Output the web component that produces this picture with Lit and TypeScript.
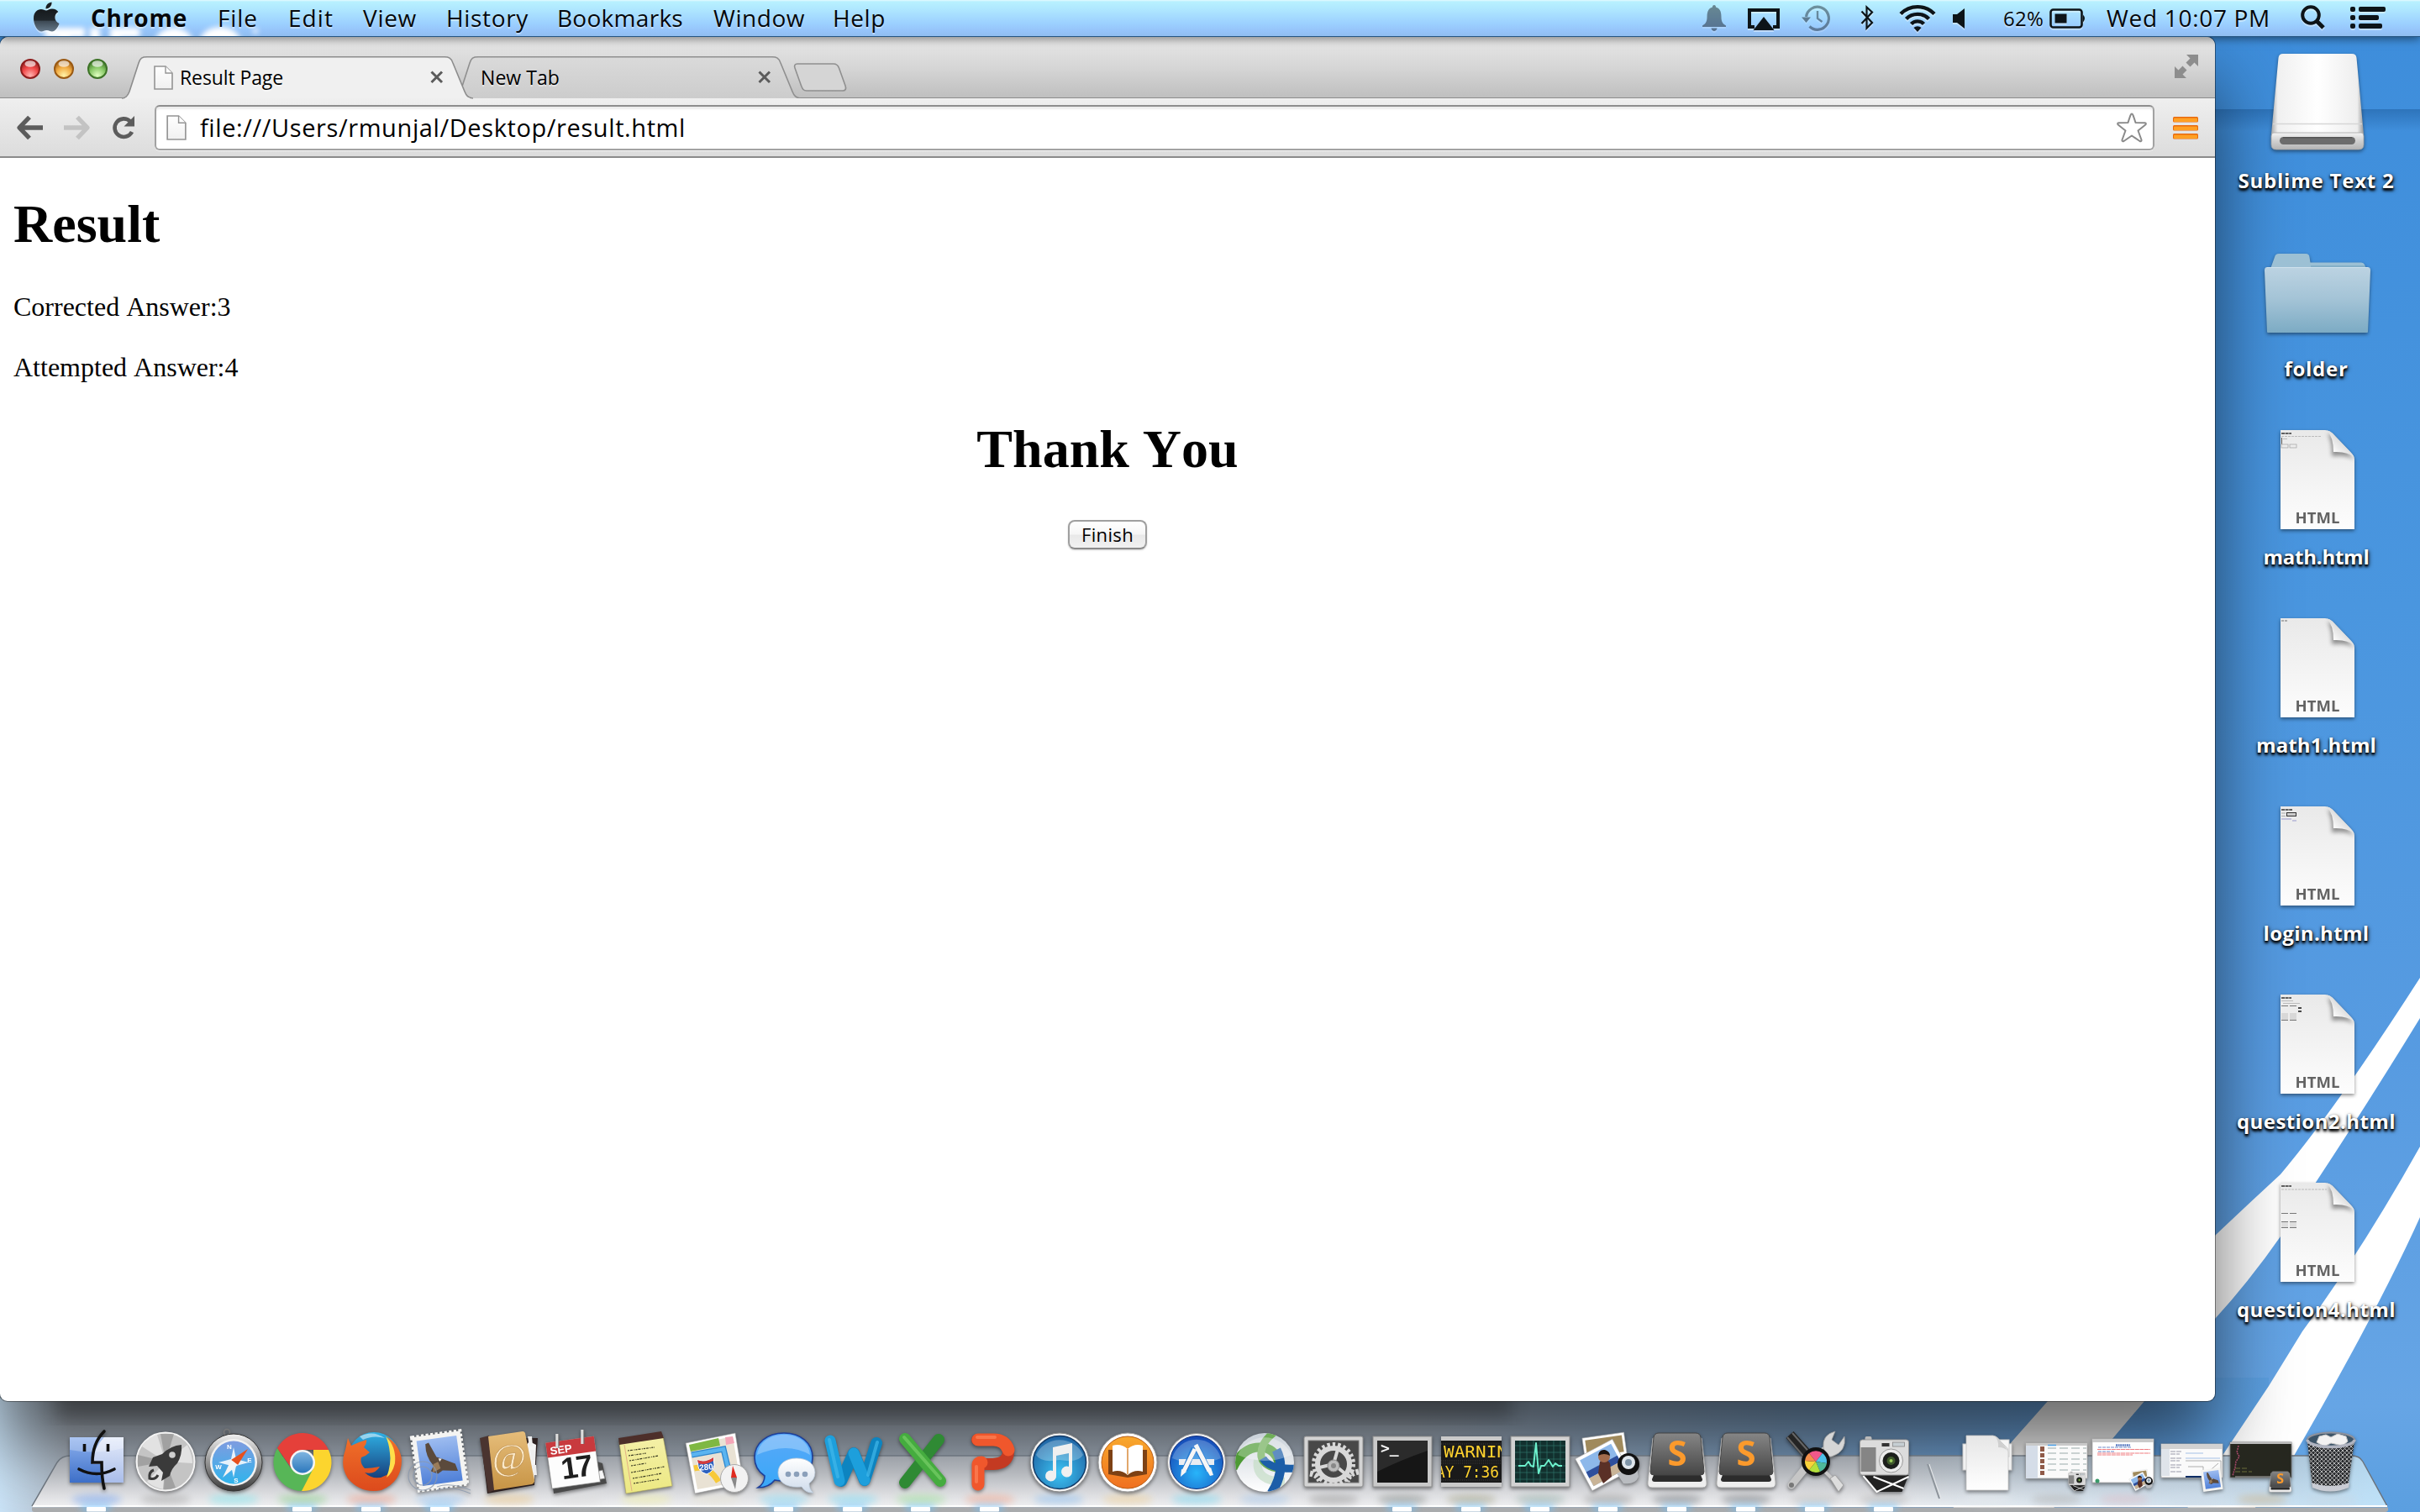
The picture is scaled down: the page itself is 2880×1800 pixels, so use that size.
import { LitElement, html, svg, css } from "lit";
import { customElement, property } from "lit/decorators.js";

const UI = css`"Open Sans", "Noto Sans", "Liberation Sans", sans-serif`;

/** One line of text tracked out (or in) so that it covers a given width. */
@customElement("fit-text")
class FitText extends LitElement {
  @property() text = "";
  @property({ type: Number }) span = 100;
  static styles = css`
    :host { display: inline-block; white-space: pre; }
    .line { display: inline-block; }
  `;
  firstUpdated() {
    const line = this.renderRoot.querySelector(".line") as HTMLElement;
    const natural = line.getBoundingClientRect().width;
    line.style.letterSpacing = `${(this.span - natural) / this.text.length}px`;
  }
  render() {
    return html`<span class="line">${this.text}</span>`;
  }
}

@customElement("menu-bar")
class MenuBar extends LitElement {
  static styles = css`
    :host {
      display: flex; position: relative; height: 44px; box-sizing: border-box;
      border-bottom: 1px solid #245481; overflow: hidden;
      background: linear-gradient(#e6f9ff 0, #b8f1ff 2px, #aee6ff 12px, #9cd0ff 28px, #96c4fa 36px, #90bdf0 43px);
      font: 28px/43px ${UI}; color: #05080b;
      text-shadow: 0 2px 1px rgba(255, 255, 255, 0.45);
    }
    .haze { position: absolute; left: 0; top: 0; filter: blur(3px); }
    .menus { position: relative; display: grid; padding-left: 38px; grid-template-columns: 70px 151px 84px 89px 99px 132px 186px 142px 80px; }
    .app { font-weight: 700; }
    .status { position: relative; margin-left: auto; display: grid; grid-template-columns: 54px 64px 70px 46px 64px 60px 55px 68px 231px 59px 83px; }
    .pct { font-size: 24px; }
    .menus svg, .status svg { display: block; filter: drop-shadow(0 2px 0 rgba(255, 255, 255, 0.4)); }
    .status .faded { opacity: 0.42; }
  `;
  render() {
    const menus: [string, number][] = [["File", 48], ["Edit", 54], ["View", 64], ["History", 98], ["Bookmarks", 150], ["Window", 109], ["Help", 63]];
    return html`
      <svg class="haze" width="340" height="60" viewBox="0 0 340 60"><g fill="#fff"><rect x="53" y="33" width="48" height="12"/><rect x="70" y="33" width="13" height="27"/><rect x="107" y="33" width="12" height="27"/><rect x="131" y="33" width="36" height="12" rx="5"/><rect x="131" y="33" width="12" height="27"/><ellipse cx="207" cy="52" rx="23" ry="19"/><ellipse cx="262" cy="52" rx="25" ry="20"/><circle cx="304" cy="37" r="3"/></g></svg>
      <nav class="menus">
        <svg width="34" height="43" viewBox="0 0 34 43">
          <defs><linearGradient id="ap" x2="0" y2="1"><stop offset="0" stop-color="#15191c"/><stop offset=".5" stop-color="#20272c"/><stop offset=".55" stop-color="#3d4a55"/><stop offset="1" stop-color="#66798a"/></linearGradient></defs>
          <path fill="#1b2023" d="M16.500 10.500C16 6.500 19 3.300 23.500 2.500C24 6.500 21 10.200 16.500 10.500Z"/>
          <path fill="url(#ap)" d="M17 12.500C18.500 12.500 20.500 10.500 24 10.500C27.500 10.700 30 12 31.300 14C25.500 17.500 26.500 25.500 32.500 28C31 32.500 27.500 37.500 24 37.500C21.500 37.500 20.500 36 17.500 36C14.500 36 13.500 37.500 11 37.500C6.500 37.500 2 29 2 22C2 14.500 6.500 11 10.800 11C13.500 11 15.500 12.500 17 12.500Z"/>
        </svg>
        <fit-text class="app" text="Chrome" span="115"></fit-text>
        ${menus.map(([t, w]) => html`<fit-text text=${t} span=${w}></fit-text>`)}
      </nav>
      <div class="status">
        <svg class="faded" width="30" height="43" viewBox="0 0 30 43"><path d="M14 6C15.500 6 16 7 16 8.500C21 10 22.500 14 22.500 20C22.500 26 24 28 28 30.500V32H0V30.500C4 28 5.500 26 5.500 20C5.500 14 7 10 12 8.500C12 7 12.500 6 14 6ZM10.500 33.500H17.500C17 38 11 38 10.500 33.500Z"/></svg>
        <svg width="40" height="43" viewBox="0 0 40 43"><path fill="none" stroke="#0d1418" stroke-width="4" d="M8 32H2V12H36V32H30"/><path fill="#0d1418" d="M19 20L31.500 36H6.500Z"/></svg>
        <svg class="faded" width="36" height="43" viewBox="0 0 36 43"><g fill="none" stroke="#0d1418" stroke-width="3.200"><path d="M5.500 20A13.500 13.500 0 1 1 9.500 31.500"/><path stroke-width="2.400" d="M19 13V22L24.500 26"/></g><path d="M0 20.500H11L5.500 27Z"/></svg>
        <svg width="20" height="43" viewBox="0 0 20 43"><path fill="none" stroke="#0d1418" stroke-width="2.200" d="M1.500 13.500L14 27L7.500 33.500V8.500L14 14.500L1.500 28"/></svg>
        <svg width="46" height="43" viewBox="0 0 46 43"><g fill="none" stroke="#0d1418" stroke-width="4.400"><path d="M2 16.500A28 28 0 0 1 42 16.500"/><path d="M8.500 22.500A19 19 0 0 1 35.500 22.500"/><path d="M14.500 28.500A10.500 10.500 0 0 1 29.500 28.500"/></g><path fill="#0d1418" d="M17.500 33A6.500 6.500 0 0 1 26.500 33L22 38Z"/></svg>
        <svg width="16" height="43" viewBox="0 0 16 43"><path fill="#0d1418" d="M0 17H5L14 10V34L5 27H0Z"/></svg>
        <fit-text class="pct" text="62%" span="48"></fit-text>
        <svg width="46" height="43" viewBox="0 0 46 43"><rect x="1.500" y="11.500" width="37" height="21" rx="3" fill="none" stroke="#0d1418" stroke-width="2.600"/><rect x="6.500" y="16.500" width="14" height="11" fill="#0d1418"/><path fill="#0d1418" d="M40 17.500Q44 22 40 26.500Z"/></svg>
        <fit-text text="Wed 10:07 PM" span="195"></fit-text>
        <svg width="32" height="43" viewBox="0 0 32 43"><circle cx="12" cy="18" r="9.800" fill="none" stroke="#0d1418" stroke-width="4"/><path stroke="#0d1418" stroke-width="5" d="M18.500 24.500L27 33"/></svg>
        <svg width="46" height="43" viewBox="0 0 46 43"><g fill="#0d1418"><rect x="0" y="8" width="6" height="6" rx="2"/><rect x="0" y="18" width="6" height="6" rx="2"/><rect x="0" y="28" width="6" height="6" rx="2"/><rect x="10" y="8" width="32" height="6" rx="2"/><rect x="10" y="18" width="24" height="6" rx="2"/><rect x="10" y="28" width="28" height="6" rx="2"/></g></svg>
      </div>`;
  }
}

const pageGlyph = (w: number, h: number) => html`
  <svg width=${w} height=${h} viewBox="0 0 23 29">
    <defs><linearGradient id="pg" x2="0" y2="1"><stop offset="0" stop-color="#fff"/><stop offset="1" stop-color="#f0f0f0"/></linearGradient></defs>
    <path fill="url(#pg)" stroke="#949494" stroke-width="1.600" d="M1 1H14L22 9V28H1Z"/><path fill="#fff" stroke="#949494" stroke-width="1.400" d="M14 1V9H22"/>
  </svg>`;
const closeGlyph = html`<svg class="close" width="16" height="16" viewBox="0 0 16 16"><path stroke="#5b5b5b" stroke-width="3" d="M1.500 1.500L14 14M14 1.500L1.500 14"/></svg>`;

@customElement("browser-window")
class BrowserWindow extends LitElement {
  static styles = css`
    :host {
      display: flex; flex-direction: column; width: 2636px; height: 1624px; background: #fff; overflow: hidden;
      border-radius: 10px 10px 9px 9px;
      box-shadow: 0 0 0 1px rgba(0, 0, 0, 0.4), 0 54px 90px rgba(0, 0, 0, 0.6);
    }
    .strip {
      display: flex; height: 73px; box-sizing: border-box; padding-left: 24px; border-bottom: 1px solid #8c8c8c;
      background: linear-gradient(#f3f3f3 0, #e6e6e6 3px, #d6d6d6 36px, #bfbfbf 72px); font: 23px/50px ${UI}; color: #000;
    }
    .lights { display: flex; gap: 16px; padding-top: 26px; width: 121px; }
    .tab { position: relative; z-index: 1; display: flex; align-items: center; height: 50px; margin-top: 23px; box-sizing: border-box; }
    .tab.active { width: 418px; padding: 0 35px 0 38px; z-index: 2; }
    .idle { width: 414px; margin-left: -24px; padding: 0 35px 0 33px; }
    .shape { position: absolute; left: 0; top: 0; z-index: -1; }
    .tab fit-text { margin-left: 8px; flex: 1; text-shadow: 0 2px 0 rgba(255, 255, 255, 0.5); }
    .idle fit-text { margin-left: 0; }
    .newtab { margin: 31px 0 0 -9px; }
    .expand { margin: 20px 20px 0 auto; }
    .toolbar {
      display: flex; align-items: center; height: 71px; box-sizing: border-box; padding: 0 20px 0 18px; border-bottom: 2px solid #8a8a8a;
      background: linear-gradient(#efefef, #dcdcdc);
    }
    .nav { display: flex; width: 166px; gap: 22px; align-items: center; }
    .reload { margin-left: 2px; }
    .omni {
      display: flex; align-items: center; box-sizing: border-box; width: 2380px; height: 54px; padding: 0 7px 0 12px; margin-right: auto;
      border: 2px solid #a2a2a2; border-top-color: #8d8d8d; border-radius: 6px; background: #fff;
      box-shadow: inset 0 3px 2px #ececec, 0 1px 0 #f4f4f4; font: 29px/50px ${UI}; color: #000;
    }
    .omni fit-text { margin-left: 16px; flex: 1; }
    .page { padding: 42px 16px 0; font: 32px/36px "Liberation Serif", "Times New Roman", serif; color: #000; font-kerning: none; }
    h1 { font-size: 64px; line-height: 74px; margin: 0 0 43px; font-weight: 700; }
    p { margin: 0 0 36px; }
    .center { display: flex; flex-direction: column; align-items: center; padding-top: 7px; }
    .center h1 { margin-bottom: 47px; }
    button {
      width: 94px; height: 35px; padding: 0; border: 2px solid #9f9f9f; border-bottom-color: #8a8a8a; border-radius: 8px;
      background: linear-gradient(#fff 0, #f6f6f6 48%, #e9e9e9 52%, #f1f1f1 100%); box-shadow: 0 1px 2px rgba(0, 0, 0, 0.2);
      font: 22px/31px ${UI}; color: #000;
    }
  `;
  render() {
    const light = (id: string, a: string, b: string, c: string) => html`
      <svg width="24" height="24" viewBox="0 0 24 24">
        <defs><radialGradient id=${id} cx=".5" cy=".85" r=".8"><stop offset="0" stop-color=${c}/><stop offset=".55" stop-color=${b}/><stop offset="1" stop-color=${a}/></radialGradient></defs>
        <circle cx="12" cy="12" r="11" fill="url(#${id})" stroke=${a} stroke-width="2"/><ellipse cx="12" cy="6" rx="6.500" ry="3.800" fill="#fff" opacity=".65"/>
      </svg>`;
    const edge = (w: number) => `M0 50C5 50 7 47 9 42L20 8C22 2 24 .8 30 .8H${w - 34}C${w - 29} .8 ${w - 26} 2 ${w - 24} 8L${w - 10} 42C${w - 8} 47 ${w - 6} 49.500 ${w} 50`;
    return html`
      <div class="strip">
        <div class="lights">
          ${light("lr", "#8e1d1d", "#f04848", "#ffb3b0")}${light("ly", "#9a5a14", "#f2ab42", "#fff3a8")}${light("lg", "#3d7327", "#86c765", "#e0ffc0")}
        </div>
        <div class="tab active">
          <svg class="shape" width="418" height="51" viewBox="0 0 418 51"><path fill="#f0f0f0" stroke="#8c8c8c" stroke-width="1.600" d=${edge(418)}/><path stroke="#efefef" stroke-width="2" d="M4 50.500H414"/></svg>
          ${pageGlyph(23, 29)}<fit-text text="Result Page" span="123"></fit-text>${closeGlyph}
        </div>
        <div class="tab idle">
          <svg class="shape" width="414" height="50" viewBox="0 0 414 50"><defs><linearGradient id="it" x2="0" y2="1"><stop offset="0" stop-color="#dadada"/><stop offset="1" stop-color="#cccccc"/></linearGradient></defs><path fill="url(#it)" stroke="#8f8f8f" stroke-width="1.600" d=${edge(414)}/></svg>
          <fit-text text="New Tab" span="94"></fit-text>${closeGlyph}
        </div>
        <svg class="newtab" width="64" height="34" viewBox="0 0 64 34"><path fill="#d5d5d5" stroke="#8f8f8f" stroke-width="1.600" d="M5 1H48C51 1 53 2 54.500 6L62 27C63.500 31 62 33 59 33H16C12 33 11 31 9.500 27L2 6C.8 3 2 1 5 1Z"/></svg>
        <svg class="expand" width="28" height="30" viewBox="0 0 28 30"><g fill="#8d8d8d"><path d="M14 1H28V15L23.500 10.500L18.500 15.500L13.500 10.500L18.500 5.500Z"/><path d="M0 15L4.500 19.500L9.500 14.500L14.500 19.500L9.500 24.500L14 29H0Z"/></g></svg>
      </div>
      <div class="toolbar">
        <div class="nav">
          <svg width="34" height="30" viewBox="0 0 34 30"><path fill="none" stroke="#5c5c5c" stroke-width="5.400" stroke-linejoin="round" d="M33 15H7M17 2.500L5 15L17 27.500"/></svg>
          <svg width="34" height="30" viewBox="0 0 34 30"><path fill="none" stroke="#c3c3c3" stroke-width="5.400" stroke-linejoin="round" d="M2 15H28M18 2.500L30 15L18 27.500"/></svg>
          <svg class="reload" width="32" height="30" viewBox="0 0 32 30"><path fill="none" stroke="#5c5c5c" stroke-width="4.600" d="M25 20A10.800 10.800 0 1 1 23 7.500"/><path fill="#5c5c5c" d="M28 1V13.500H15.500Z"/></svg>
        </div>
        <div class="omni">
          ${pageGlyph(24, 30)}<fit-text text="file:///Users/rmunjal/Desktop/result.html" span="578"></fit-text>
          <svg width="36" height="36" viewBox="0 0 36 36"><path fill="#fff" stroke="#8a8a8a" stroke-width="2" stroke-linejoin="round" d="M18 1.500C19 1.500 19.500 2.500 22.500 12L33.500 12.300C35.500 12.500 35 14 34 14.700L25.500 21.500L29.500 32.500C29.800 34.500 28.500 34.500 27.500 34L18 27.500L8.500 34C7.500 34.500 6.200 34.500 6.500 32.500L10.500 21.500L2 14.700C1 14 .5 12.500 2.500 12.300L13.500 12C16.500 2.500 17 1.500 18 1.500Z"/></svg>
        </div>
        <svg width="30" height="28" viewBox="0 0 30 28">${[1, 11, 21].map((y) => svg`<rect x="0" y=${y} width="30" height="6.500" rx="1.500" fill="#e8690e"/><rect x="1" y=${y + 1.6} width="28" height="4.400" rx="1" fill="#ffa024"/>`)}</svg>
      </div>
      <div class="page">
        <h1>Result</h1>
        <p>Corrected Answer:3</p>
        <p>Attempted Answer:4</p>
        <div class="center"><h1>Thank You</h1><button><fit-text text="Finish" span="62"></fit-text></button></div>
      </div>`;
  }
}

/** Small marks standing for the page preview in the corner of each document. */
const previews: Record<string, unknown> = {
  "math.html": svg`<path stroke="#333" stroke-width="1.600" stroke-dasharray="4 .6" d="M1 4H13"/><path stroke="#bbb" stroke-dasharray="3 1" d="M1 7.500H49"/><path stroke="#555" d="M1.500 9V17"/><path stroke="#bbb" d="M3 10.500H8"/><rect x="1" y="17" width="8" height="4" fill="none" stroke="#aaa" stroke-width=".8"/><rect x="11" y="17" width="8" height="4" fill="none" stroke="#aaa" stroke-width=".8"/>`,
  "math1.html": svg`<path stroke="#999" stroke-width="1.400" stroke-dasharray="3 1" d="M1 3H8"/>`,
  "login.html": svg`<path stroke="#333" stroke-width="1.600" stroke-dasharray="4 .6" d="M1 4H14"/><rect x="7.500" y="7.500" width="11" height="4" fill="#ccc" stroke="#333"/><path stroke="#aaa" d="M1 8H6M1 11.500H6"/><path stroke="#99c" d="M1 15H13M14 17H19"/>`,
  "question2.html": svg`<path stroke="#333" stroke-width="1.600" stroke-dasharray="4 .6" d="M1 4H13"/><path stroke="#bbb" d="M1 7.500H15M3 10.500H23"/><path stroke="#777" d="M1 13.500H9M11 13.500H19M1 30.500H9M11 30.500H19"/><path stroke="#111" stroke-width="1.400" d="M21 16H25M21 20H25"/><path fill="#d8d8d8" d="M1 22H9V30H1ZM11 22H19V30H11Z"/>`,
  "question4.html": svg`<path stroke="#333" stroke-width="1.600" stroke-dasharray="4 .6" d="M1 4H13"/><path stroke="#bbb" stroke-dasharray="3 1" d="M1 8H55"/><path stroke="#777" d="M1 36.500H9M11 36.500H19M1 46.500H9M11 46.500H19M1 53.500H9M11 53.500H19"/><path fill="#dedede" d="M1 47H9V53H1ZM11 47H19V53H11Z"/>`,
};

@customElement("desktop-item")
class DesktopItem extends LitElement {
  @property() name = "";
  @property() kind = "doc";
  @property({ type: Number }) span = 100;
  static styles = css`
    :host { display: flex; flex-direction: column; justify-content: flex-end; align-items: center; height: 224px; }
    svg { display: block; margin-bottom: 17px; overflow: visible; filter: drop-shadow(0 2px 2px rgba(0, 0, 0, 0.45)); }
    .name { margin-right: 3px; font: bold 24px/32px ${UI}; color: #fff; text-shadow: 0 3px 3px rgba(0, 0, 0, 0.85), 1px 2px 5px rgba(0, 0, 0, 0.75), 0 1px 2px #000; }
    .type { font: bold 18.5px ${UI}; fill: #636363; }
  `;
  private art() {
    if (this.kind === "drive")
      return svg`
        <defs><linearGradient id="db"><stop offset="0" stop-color="#a8a8a8"/><stop offset=".07" stop-color="#f0f0f0"/><stop offset=".5" stop-color="#fff"/><stop offset=".93" stop-color="#eee"/><stop offset="1" stop-color="#999"/></linearGradient>
        <linearGradient id="df" x2="0" y2="1"><stop offset="0" stop-color="#f4f4f4"/><stop offset=".5" stop-color="#cfcfcf"/><stop offset="1" stop-color="#b4b4b4"/></linearGradient></defs>
        <path fill="url(#db)" d="M24 2H106Q111 2 111.500 7L120 98H10L18.500 7Q19 2 24 2Z"/><path stroke="#d6d6d6" stroke-width="1.500" d="M12 85.500H118"/>
        <path fill="url(#df)" stroke="#a5a5a5" stroke-width=".8" d="M13 96H117Q120 96 120 100V110Q120 116 114 116H16Q10 116 10 110V100Q10 96 13 96Z"/><rect x="20" y="101" width="90" height="9" rx="4.500" fill="#6c6c6c"/><path stroke="#555" stroke-width="1.500" d="M24 101.800H106"/>`;
    if (this.kind === "folder")
      return svg`
        <defs><linearGradient id="fb" x2="0" y2="1"><stop offset="0" stop-color="#bcd3e2"/><stop offset=".5" stop-color="#a3c3d6"/><stop offset="1" stop-color="#7cabc4"/></linearGradient></defs>
        <path fill="#9cc0d4" d="M9 34L14 20Q15 16 19 16H51Q55 16 55.500 20L56.500 26.500H117Q120 26.500 121 29L123 34Z"/><path stroke="#6fa0bb" d="M57 31H122"/>
        <path fill="url(#fb)" d="M5 32H125Q128 32 128 36L125 109Q125 110 124 110H6Q5 110 5 109L2 36Q2 32 5 32Z"/><path stroke="#cfe1ec" stroke-width="1" d="M5 32.500H125"/>`;
    return svg`
      <defs><linearGradient id="pb" x2="0" y2="1"><stop offset="0" stop-color="#e9e9e9"/><stop offset="1" stop-color="#fdfdfd"/></linearGradient>
      <linearGradient id="cu" x1="0" y1="1" x2="1" y2="0"><stop offset=".2" stop-color="#fff"/><stop offset=".7" stop-color="#d0d0d0"/><stop offset="1" stop-color="#a8a8a8"/></linearGradient>
      <filter id="bl"><feGaussianBlur stdDeviation="2.500"/></filter><clipPath id="dc"><path d="M0 0H53Q59 0 64 6L84 27Q88 31 88 35V118H0Z"/></clipPath></defs>
      <g transform="translate(21 2)"><path fill="url(#pb)" d="M0 0H53Q59 0 64 6L84 27Q88 31 88 35V118H0Z"/>
        <g clip-path="url(#dc)"><path fill="#000" opacity=".4" filter="url(#bl)" d="M56 4Q62 14 61 31Q80 29 88 36L66 8Z"/></g>
        <path fill="url(#cu)" d="M55 .5Q63 8 63 26Q80 25 88 33Q86 29 84 27L64 6Q60 1 55 .5Z"/>${previews[this.name]}
        <text class="type" x="44" y="111" text-anchor="middle" textLength="53">HTML</text></g>`;
  }
  render() {
    return html`<svg width="130" height="120" viewBox="0 0 130 120">${this.art()}</svg><fit-text class="name" text=${this.name} span=${this.span}></fit-text>`;
  }
}

const sublime = svg`
  <path fill="#eee" stroke="#aaa" d="M7 10H65L71 62Q72 69 66 69H6Q0 69 1 62Z"/>
  <path fill="#2c2c2c" d="M8 54H64L66 59Q66 62 63 62H9Q6 62 6 59Z"/>
  <path fill="url(#sg)" stroke="#444" d="M14 4H58Q63 4 64 9L68 50Q68 54 64 54H8Q4 54 4 50L8 9Q9 4 14 4Z"/>
  <text x="36" y="43" text-anchor="middle" class="sub">S</text>`;
const eagle = svg`<path fill="#5b4a3c" d="M24 15L28 14L35 32L41 35L56 43L58 52L40 49L34 52L26 48L30 42Q22 30 24 15Z"/><path fill="#9a7c5a" d="M30 40L36 38L38 46L28 50Z"/><path fill="#eee" d="M37 34L41 35L38 38Z"/>`;
const photos = svg`
  <g transform="rotate(-8 36 30)"><rect x="8" y="6" width="50" height="40" fill="#fff" stroke="#bbb" stroke-width=".6"/><rect x="11" y="9" width="44" height="20" fill="#a08a5c"/></g>
  <g transform="rotate(-28 30 42)"><rect x="4" y="20" width="50" height="43" fill="#fff" stroke="#aaa" stroke-width=".6"/><rect x="8" y="24" width="42" height="35" fill="#8db8ea"/><rect x="8" y="40" width="42" height="8" fill="#2e4f9c"/><path fill="#c9b497" d="M8 48H50V59H8Z"/></g>
  <path fill="#5a3026" d="M24 52L26 38Q33 32 38 40L40 56L30 64Z"/><circle cx="31" cy="32" r="7" fill="#a36b4c"/><path fill="#1d120f" d="M24 31Q25 23 32 24Q38 26 38 31Q31 27 24 31Z"/>
  <path fill="#b9bcc0" d="M46 52L70 46L72 56Q68 66 54 64Z"/><circle cx="60" cy="41" r="13" fill="#111"/><circle cx="60" cy="39" r="8" fill="#dfe6ec"/><circle cx="60" cy="39" r="4" fill="#7f95a8"/>`;
const camera = svg`<g transform="translate(3.500 0)">
  <path fill="#222" d="M8 54H62L54 74H24Z"/><path fill="none" stroke="#fff" stroke-width="2" d="M8 55L24 74L62 56M20 56L56 70"/>
  <rect x="10" y="8" width="8" height="8" rx="2" fill="#bbb"/><rect x="4" y="12" width="58" height="42" rx="3" fill="#dcdcdc" stroke="#999"/><rect x="5" y="21" width="18" height="29" fill="#858585"/>
  <rect x="30" y="16" width="9" height="4" fill="#333"/><rect x="43" y="15" width="14" height="5" fill="#c6ced3" stroke="#888" stroke-width=".8"/>
  <circle cx="41" cy="37" r="14" fill="#ececec" stroke="#999"/><circle cx="41" cy="37" r="10" fill="#1c1f1c"/><circle cx="41" cy="37" r="5" fill="#3f5a2c"/><circle cx="41" cy="37" r="2" fill="#9ccf5a"/></g>`;

interface App { art: unknown; glow: string; open?: boolean }
const apps: App[] = [
  { glow: "#7aa6f0", open: true, art: svg`
    <rect x="4" y="9" width="64" height="54" fill="url(#fl)"/><path fill="url(#fr)" d="M45 9H68V63H42L43 41H31Q32 22 45 9Z"/><path fill="#fff" opacity=".25" d="M4 9H68V22Q36 30 4 24Z"/>
    <path fill="none" stroke="#111" stroke-width="3.600" stroke-linecap="round" d="M45 2Q31 16 31 39H42Q42 58 45 70M15 47Q36 58 57 47"/><path stroke="#111" stroke-width="3.600" d="M21.500 17V26M49.500 17V26"/>` },
  { glow: "#aaaaaa", art: svg`
    <circle cx="36" cy="38" r="34.500" fill="#c4c4c4" stroke="#f4f4f4" stroke-width="2"/><path fill="#fff" opacity=".5" d="M36 38L8 20Q16 8 26 6ZM36 38L62 18Q68 30 68 40ZM36 38L14 62Q24 70 34 71Z"/><path fill="#777" opacity=".45" d="M36 38L30 5H46ZM36 38L48 69Q38 72 33 71ZM36 38L3 30V44Z"/>
    <path fill="#3a3a3a" d="M55 18Q42 19 32 29L21 33L16 44L26 43L33 51L31 61L41 55Q43 46 50 40Q56 30 55 18Z"/><circle cx="44" cy="30" r="3.800" fill="#d0d0d0"/><path fill="none" stroke="#3a3a3a" stroke-width="3" d="M22 48Q16 50 17 58Q24 60 27 54"/>` },
  { glow: "#86e6ee", art: svg`
    <circle cx="28" cy="3" r="3.500" fill="none" stroke="#777" stroke-width="1.600"/><circle cx="36" cy="39" r="34" fill="url(#rim)" stroke="#333"/><circle cx="36" cy="39" r="28" fill="#f2f2f2"/><circle cx="36" cy="39" r="25.500" fill="url(#saf)"/>
    <path fill="#fff" opacity=".85" d="M36 21L39 35L54 39L39 43L36 57L33 43L18 39L33 35Z"/><path fill="#e8501c" d="M53 23L41 42L33 36Z"/><path fill="#f4f4f4" d="M23 57L33 36L41 42Z"/>
    <g class="compass"><text x="31" y="23">N</text><text x="39" y="63">S</text><text x="18" y="47">W</text><text x="55" y="39">E</text></g>` },
  { glow: "#8fd08c", open: true, art: svg`
    <path fill="#57b657" d="M6 22A34 34 0 0 0 35 73L50 46L22 46Z"/><path fill="#fcd52e" d="M67 24A34 34 0 0 1 35 73L49 46V24Z"/><path fill="#e5403a" d="M6 22A34 34 0 0 1 67 24H36L23 46Z"/>
    <circle cx="36" cy="39" r="15" fill="#f6f6f6"/><circle cx="36" cy="39" r="12.500" fill="url(#chb)"/>` },
  { glow: "#f0a08a", open: true, art: svg`
    <circle cx="39" cy="34" r="31" fill="url(#ffb)"/><path fill="url(#ffo)" d="M8 10L12 19Q20 15 30 12Q31 16 27 21L34 27Q30 31 24 33Q22 40 28 46Q36 46 46 44Q40 54 28 51Q40 62 54 54Q66 46 62 28Q60 14 54 8Q70 18 72 36Q72 62 48 72Q24 77 8 58Q-2 42 5 24Z"/><path fill="#ffe04a" d="M53 8Q66 20 64 40Q61 52 54 57Q60 40 58 28Q57 16 53 8Z"/><path fill="#fff" opacity=".5" d="M22 8Q38 0 52 10Q38 6 26 12Z"/>` },
  { glow: "#9dc8f4", open: true, art: svg`
    <g transform="translate(-3 0) rotate(-8 38 36)"><rect x="9" y="5" width="58" height="64" fill="#f4f4f2" stroke="#f4f4f2" stroke-width="4" stroke-dasharray="3.200 2.400"/><rect x="14" y="10" width="48" height="54" fill="url(#ml)"/>${eagle}</g>
    <g fill="none" stroke="#8a98ac" stroke-width="1.200" opacity=".8"><circle cx="15" cy="55" r="17"/><circle cx="15" cy="55" r="11"/><path d="M32 68Q48 62 72 72M32 72Q48 66 72 76"/></g>` },
  { glow: "#ecc98e", art: svg`
    <path fill="#2c2020" d="M2 10L10 76L66 66L70 10Z"/><path fill="#f4f4f4" d="M12 71L66 62L68 18L60 14Z"/><path fill="#4a3430" d="M1 10L12 7L19 72L11 75Z"/><path fill="url(#bk)" d="M11 8L52 2Q54 2 55 4L66 60Q66 64 63 65L18 72Z"/><path fill="#eee" d="M58 8H63L64 20H60ZM61 24H66L67 36H63ZM63 42H68L69 54H66Z"/><text x="36" y="47" class="at" text-anchor="middle">@</text>` },
  { glow: "#dddddd", art: svg`
    <path fill="#4a4a4a" d="M1 20L8 76L71 64L66 40Z"/><path fill="#f6f6f6" d="M8 70L69 58L66 48L9 64Z" stroke="#888" stroke-width=".8"/>
    <g transform="rotate(-8 34 40)"><rect x="2" y="11" width="58" height="55" fill="#fdfdfd" stroke="#777" stroke-width=".6"/><path fill="#c83a3e" d="M2 11H60V29H2Z"/><text x="6" y="26" class="mon">SEP</text><text x="34" y="57" class="day" text-anchor="middle">17</text></g><path stroke="#ddd" stroke-width="3.500" d="M12 5V22M42 0V17"/><path stroke="#666" stroke-width="1" d="M14 5V22M44 0V17"/>` },
  { glow: "#f2f0a8", art: svg`
    <path fill="url(#nt)" stroke="#a9a35b" stroke-width=".6" d="M4 15L56 8L67 67L12 76Z"/><path fill="#4d2f2a" d="M3 10L54 2L57 10L4 18Z"/><path stroke="#e0a080" stroke-width=".8" d="M10 18L19 73"/>
    <path fill="none" stroke="#3a3a22" stroke-width="1.200" stroke-dasharray="2 1 3 1.500 1 1" d="M14 25L46 21M15 31L36 28M16 37L51 31M18 43L36 40M18 51L58 44M20 58L55 52M21 64L52 59"/>` },
  { glow: "#e8e4d4", art: svg`
    <path fill="#fff" stroke="#999" stroke-width=".6" d="M1 16L60 4L70 64L12 76Z"/><path fill="#e9e2d4" d="M5 19L57 8L66 62L15 71Z"/><path fill="#7fb843" d="M5 18L40 10L42 19L7 26Z"/><path fill="#f5a6b8" d="M48 9L57 8L59 16L49 18Z"/>
    <path fill="none" stroke="#2e86cc" stroke-width="7" d="M8 30L46 23L52 48"/><path fill="none" stroke="#5ab4f0" stroke-width="4.500" d="M8 30L46 23L52 48"/><path fill="none" stroke="#f7c93a" stroke-width="7" d="M11 46Q28 42 40 62"/>
    <path fill="#2d62c0" stroke="#fff" d="M15 36Q24 40 34 33L35 42Q34 50 26 53Q17 50 16 44Z"/><path fill="#d43c3c" d="M15 36Q24 40 34 33L34 37Q24 43 16 40Z"/><text x="25.500" y="48" class="hwy" text-anchor="middle" transform="rotate(-6 25 45)">280</text>
    <circle cx="59" cy="58" r="16.500" fill="#f2f2f2" stroke="#aaa"/><path fill="#e02b20" d="M57 43L62 57H55Z"/><path fill="#888" d="M55 57H62L60 71Z"/>` },
  { glow: "#8fdcf4", open: true, art: svg`
    <path fill="url(#mb)" stroke="#1d3f9a" stroke-width="1.600" d="M36 4C56 4 70 16 70 33S56 61 36 61Q30 61 25 60Q18 69 5 69Q13 64 13 55Q1 47 1 33C1 16 16 4 36 4Z"/><path fill="#fff" opacity=".28" d="M36 6C54 6 66 16 67 30Q40 14 4 30C6 16 18 6 36 6Z"/>
    <path fill="url(#mw)" stroke="#b9c6d6" stroke-width=".8" d="M51 34C64 34 73 41 73 51Q73 59 66 64Q66 71 71 75Q62 76 57 68C40 70 29 63 29 51C29 41 38 34 51 34Z"/><g fill="#8ba0ba"><circle cx="41" cy="53" r="3.300"/><circle cx="51" cy="53" r="3.300"/><circle cx="61" cy="53" r="3.300"/></g>` },
  { glow: "#86dcf4", open: true, art: svg`
    <g fill="none" stroke-linecap="round" stroke-linejoin="round"><path stroke="#0d84c0" stroke-width="14" d="M22 61L37 28L50 60L64 16"/><path stroke="#1d9fdc" stroke-width="13" d="M9 13L20 61M37 28L50 60"/><path stroke="#42b8ea" stroke-width="4" opacity=".7" d="M8 12L18 56M65 15L54 54"/></g>` },
  { glow: "#9fe09a", open: true, art: svg`
    <g fill="none" stroke-linecap="round" transform="translate(4 0)"><path stroke="#2f8a34" stroke-width="14" d="M53 12L13 63"/><path stroke="#45ac3f" stroke-width="14" d="M13 11L55 61"/><path stroke="#77cf68" stroke-width="4" opacity=".7" d="M12 9L55 58"/></g>` },
  { glow: "#f4a890", open: true, art: svg`
    <g fill="none" stroke-linecap="round" stroke-linejoin="round" transform="translate(8 0)"><path stroke="#c43a22" stroke-width="14" d="M18 41H32Q50 40 50 26Q49 13 34 12H13"/><path stroke="#f0572c" stroke-width="15" d="M14 65V42Q14 39 18 39M14 12H32Q46 12 50 24"/><path stroke="#ff8a60" stroke-width="4" opacity=".6" d="M12 62V44M13 9H34"/></g>` },
  { glow: "#8fc0f0", art: svg`<g transform="translate(1 0)">
    <circle cx="36" cy="39" r="35" fill="#f2f2f2" stroke="#8a8a8a"/><circle cx="36" cy="39" r="31.500" fill="url(#itb)" stroke="#123a66" stroke-width="1.500"/><path fill="#fff" opacity=".25" d="M8 30A31 31 0 0 1 64 30Q58 40 36 36Q14 40 8 30Z"/>
    <path fill="#f0f0f0" d="M28 21L51 16V50A6.500 6.500 0 1 1 47 44V28L32 31V54A6.500 6.500 0 1 1 28 49Z"/></g>` },
  { glow: "#f2d29a", art: svg`
    <circle cx="36" cy="39" r="35" fill="#fff" stroke="#a0a0a0"/><circle cx="36" cy="39" r="31" fill="url(#ibk)" stroke="#b85c14"/><path fill="#7d4114" d="M13 24H59V53L36 57L13 53Z"/><path fill="#fff" d="M36 23Q28 16 18 19V50Q28 47 36 54Q44 47 54 50V19Q44 16 36 23Z"/><path stroke="#d98a3a" stroke-width="1.500" d="M36 23V53"/>` },
  { glow: "#7ed8f2", art: svg`
    <circle cx="36" cy="39" r="34.500" fill="#f4f4f4" stroke="#999"/><circle cx="36" cy="39" r="31.500" fill="url(#asb)" stroke="#10307c"/><path fill="#fff" opacity=".22" d="M7 34A30 30 0 0 1 65 34Q36 46 7 34Z"/>
    <path stroke="#e9edf2" stroke-width="7" d="M15 38.500H57"/><path stroke="#2a7cd0" stroke-width="7" d="M33 22L22 48M37 22L50 48"/><path stroke="#f6f6f6" stroke-width="5" d="M34 23L21 49M35 18L51 49"/><path fill="#f6f6f6" d="M18 47L24 50L17 56ZM48 48L53 45L56 54L52 55Z"/>` },
  { glow: "#a8c8ea", art: svg`
    <circle cx="36" cy="39" r="35" fill="url(#any)"/><g fill="none" clip-path="url(#anc)"><path stroke="#c4ddc6" stroke-width="10" d="M28 36Q24 62 60 62" opacity=".7"/><path stroke="#4d9a34" stroke-width="11" d="M-2 46Q12 16 38 22Q54 28 54 48"/><path stroke="#6fae58" stroke-width="9" d="M52 0Q30 14 32 32Q34 42 50 46"/><path stroke="#1c5ea8" stroke-width="11" d="M50 24Q62 48 44 76"/><path stroke="#1c5ea8" stroke-width="9" d="M34 34Q42 48 74 46"/></g><path fill="#fff" opacity=".3" d="M4 30A35 35 0 0 1 68 30Q36 44 4 30Z"/>` },
  { glow: "#9a9a9a", art: svg`
    <rect x="1" y="8" width="70" height="60" rx="2" fill="#d4d4d4" stroke="#909090"/><rect x="6" y="13" width="60" height="50" fill="#484848" stroke="#777"/>
    <g fill="none" stroke="#d8d8d8"><circle cx="36" cy="41" r="19" stroke-width="6"/><circle cx="36" cy="41" r="23.500" stroke-width="5" stroke-dasharray="3.400 3"/><path stroke-width="4" d="M36 41L42 20M36 41L15 46M36 41L53 55"/><path stroke-width="7" stroke-dasharray="3.400 2.500" d="M8 52Q18 54 20 62M66 50Q54 52 52 62"/></g><circle cx="36" cy="43" r="7" fill="#bbb" stroke="#888"/><circle cx="36" cy="43" r="3" fill="#888"/>` },
  { glow: "#8a8f8c", open: true, art: svg`
    <rect x="1" y="8" width="70" height="60" fill="#c9c9c9" stroke="#8c8c8c"/><rect x="6" y="13" width="60" height="50" fill="#161616"/><path fill="#3a3a3a" d="M6 13H66V25Q34 36 6 50Z" opacity=".6"/><text x="10" y="28" class="term">&gt;_</text>` },
  { glow: "#a5a48a", open: true, art: svg`
    <rect x="0" y="8" width="72" height="60" fill="#1a1a1a"/><rect x="0" y="8" width="72" height="5" fill="#c9c9c9"/><rect x="0" y="63" width="72" height="5" fill="#c9c9c9"/><path stroke="#333" stroke-dasharray="1 1.500" stroke-width="1.500" d="M0 17H72M0 37H72M0 40H72M0 60H72"/>
    <g clip-path="url(#ledc)"><text x="3" y="33" class="led" textLength="76" lengthAdjust="spacingAndGlyphs">WARNIN</text><text x="-6" y="57" class="led" textLength="75" lengthAdjust="spacingAndGlyphs">AY 7:36</text></g>` },
  { glow: "#98b0aa", open: true, art: svg`
    <rect x="1" y="8" width="70" height="60" fill="#d2d2d2" stroke="#8c8c8c"/><rect x="6" y="13" width="60" height="50" fill="#12302e"/><path stroke="#2f7468" stroke-width=".7" d="M12 13V63M20 13V63M28 13V63M36 13V63M44 13V63M52 13V63M60 13V63M6 19H66M6 27H66M6 35H66M6 43H66M6 51H66M6 59H66"/>
    <path fill="none" stroke="#6cf0cc" stroke-width="2" stroke-linejoin="round" d="M10 43H18L22 38L25 43L28 44L31 16L34 52L37 43L41 43L46 36L51 44L54 40L58 43H62"/>` },
  { glow: "#9a9a9a", open: true, art: photos },
  { glow: "#7d8084", open: true, art: sublime },
  { glow: "#7d8084", open: true, art: sublime },
  { glow: "#c0c0c0", open: true, art: svg`
    <path stroke="#242424" stroke-width="12" d="M6 6L30 33"/><path stroke="#666" stroke-width="2" d="M9 4L33 31M3 9L26 36"/><path stroke="#c6c6c6" stroke-width="9" stroke-linecap="round" d="M8 66L34 34L54 20"/><path fill="#d6d6d6" stroke="#999" stroke-width=".8" d="M46 22Q44 6 60 2L56 12L64 18L71 8Q74 26 56 32Q50 34 46 22Z"/><circle cx="8" cy="66" r="3" fill="#777"/>
    <path stroke="#c8c8c8" stroke-width="4" d="M44 46L58 60"/><path fill="#ddd" stroke="#999" stroke-width=".8" d="M54 58L60 54L70 66L64 74Z"/><circle cx="37" cy="38" r="17" fill="#111"/>
    <path fill="#f0588a" d="M37 38L29 28A13 13 0 0 1 45 28Z"/><path fill="#4fc0e8" d="M37 38L45 28A13 13 0 0 1 50 40Z"/><path fill="#4fb89a" d="M37 38L50 40A13 13 0 0 1 42 50Z"/><path fill="#b4e03c" d="M37 38L42 50A13 13 0 0 1 29 48Z"/><path fill="#f8d23a" d="M37 38L29 48A13 13 0 0 1 24 37Z"/><path fill="#f4904a" d="M37 38L24 37A13 13 0 0 1 29 28Z"/>` },
  { glow: "#b8b8b8", open: true, art: camera },
];

const stash: App[] = [
  { glow: "#e6eaee", art: svg`<rect x="7" y="17" width="58" height="31" fill="#f2f2f2" stroke="#ccc"/><rect x="14" y="12" width="48" height="20" fill="#f6f6f6" stroke="#ccc"/><path fill="url(#sh)" stroke="#c4c4c4" stroke-width=".8" d="M11 7H43Q48 8 52 14L60 22Q61 24 61 27V72H11Z"/><path fill="#cfcfcf" d="M44 7Q50 12 49 21Q57 21 61 26Q58 20 52 14Q48 8 44 7Z"/>` },
  { glow: "#b4b4b4", art: svg`<rect x="0" y="16" width="73" height="42" fill="#fafafa" stroke="#aaa" stroke-width=".8"/><rect x="0" y="16" width="73" height="3" fill="#c9c9c9"/><rect x="0" y="19" width="14" height="39" fill="#d5dde8"/><path stroke="#9aa" stroke-dasharray="10 4" d="M26 22H72M26 28H72M26 35H72M26 41H72M26 48H72"/><path stroke="#4aa0e8" stroke-width="1.500" d="M26 18.500H36"/><path fill="#8f5a48" d="M17 20H22V26H17ZM17 28H22V33H17ZM17 35H22V40H17ZM17 42H22V47H17ZM17 49H22V54H17Z"/><g transform="translate(48 47) scale(.35)">${camera}</g>` },
  { glow: "#dcc0c8", art: svg`<rect x="-2" y="11" width="73" height="52" fill="#fefefe" stroke="#aaa" stroke-width=".8"/><rect x="-2" y="11" width="73" height="4" fill="#c9c9c9"/><path stroke="#5f7fc4" stroke-width="2.400" stroke-dasharray="2 .6" d="M26 18.500H43"/><path stroke="#6f8ccb" stroke-dasharray="4 1" d="M5 21H44M5 26H24"/><path stroke="#f07c80" stroke-width="1.200" stroke-dasharray="5 .6" d="M4 23.500H67M4 28H67M4 30H46"/><circle cx="4" cy="61" r="2.500" fill="#3a9a6a"/><g transform="translate(43 46) scale(.37)">${photos}</g>` },
  { glow: "#cfdce8", art: svg`<rect x="-2" y="17" width="73" height="40" fill="#fafafa" stroke="#aaa" stroke-width=".8"/><rect x="-2" y="17" width="73" height="6" fill="#d2d2d2"/><rect x="-2" y="23" width="10" height="32" fill="#dfe4ea"/><path stroke="#99a" stroke-dasharray="6 1" d="M9 26H23M9 29H20M9 34H23M9 37H20M9 42H23M9 45H20M9 50H23"/><path stroke="#a4c0e6" d="M27 28H48M27 34H68"/><path fill="none" stroke="#999" stroke-width=".8" d="M27 37H69V56M30 44H48V52M52 52L66 40"/><rect x="27" y="55" width="20" height="2" fill="#0c2c64"/><g transform="translate(44 45) scale(.38)"><g transform="rotate(-8 38 36)"><rect x="6" y="4" width="62" height="68" fill="#f4f4f2"/><rect x="14" y="11" width="48" height="54" fill="url(#ml)"/>${eagle}</g></g>` },
  { glow: "#cbb896", art: svg`<rect x="-2" y="15" width="73" height="42" fill="#26271f" stroke="#777" stroke-width=".8"/><rect x="-2" y="15" width="73" height="2" fill="#bbb"/><path fill="none" stroke="#a8486a" stroke-width="1.500" stroke-dasharray="2 1" d="M8 19L6 27L9 32L5 38L4 45L1 55"/><path stroke="#6a6f3a" stroke-dasharray="6 2" d="M4 46H18M4 50H24"/><path stroke="#aaa" d="M4 56H60"/><g transform="translate(44 48) scale(.38)">${sublime}</g>` },
  { glow: "#c8d8e4", art: svg`<path fill="#2c2e31" d="M8 14L14 68Q35 76 56 68L64 14Z"/><path fill="url(#mesh)" d="M8 14L14 68Q35 76 56 68L64 14Z"/><ellipse cx="36" cy="12" rx="28" ry="8" fill="#3c5468"/><path fill="#f2f2f2" stroke="#c8c8c8" d="M19 15L22 8L30 6L36 9L44 5L54 8L56 14L50 19L36 16L28 20Z"/><path fill="none" stroke="#b0b4c0" stroke-width="3.500" d="M8 12A28 8.500 0 0 0 64 12"/><path fill="none" stroke="#8d919c" stroke-width="2" d="M8 12A28 8.500 0 0 1 64 12"/><path fill="#c9ccd4" d="M13 63Q35 71 58 63L57 69Q35 78 14 69Z"/>` },
];

@customElement("dock-shelf")
class DockShelf extends LitElement {
  static styles = css`
    :host { display: flex; position: relative; height: 132px; padding: 34px 0 0 74px; box-sizing: border-box; }
    .shelf { position: absolute; left: 0; top: 0; }
    .slot { position: relative; display: flex; justify-content: center; width: 81.8px; }
    .slot svg { display: block; overflow: visible; }
    .art { filter: drop-shadow(0 2px 2px rgba(0, 0, 0, 0.45)); }
    .split { position: relative; width: 41.4px; }
    .sub { font: bold 42px ${UI}; fill: #fb9a2c; }
    .at { font: 44px "Liberation Serif", serif; fill: #fbe9c8; stroke: #b88a4a; stroke-width: 0.5px; }
    .mon { font: bold 13px "Liberation Sans", sans-serif; fill: #fff; }
    .day { font: bold 36px "Liberation Sans", sans-serif; fill: #1e1e1e; letter-spacing: -2px; }
    .hwy { font: bold 10px "Liberation Sans", sans-serif; fill: #fff; }
    .compass { font: bold 8px "Liberation Sans", sans-serif; fill: #fff; text-anchor: middle; }
    .term { font: bold 18px "DejaVu Sans Mono", monospace; fill: #f6f6f6; }
    .led { font: 20px "DejaVu Sans Mono", monospace; fill: #ffd22e; }
  `;
  private slot_(app: App) {
    return html`<div class="slot"><svg width="72" height="98" viewBox="0 0 72 98">
      <ellipse cx="36" cy="83" rx="30" ry="6" fill=${app.glow} opacity=".55" filter="url(#soft)"/>
      ${app.open ? svg`<rect x="18" y="89" width="34" height="9" fill="#6fc4ff" opacity=".6" filter="url(#soft)"/><rect x="24" y="92" width="23" height="5.500" rx="1" fill="#fff"/>` : null}
      <g class="art">${app.art}</g></svg></div>`;
  }
  render() {
    const lin = (id: string, a: string, b: string) => svg`<linearGradient id=${id} x2="0" y2="1"><stop offset="0" stop-color=${a}/><stop offset="1" stop-color=${b}/></linearGradient>`;
    const rad = (id: string, a: string, b: string) => svg`<radialGradient id=${id} cy=".7" r=".75"><stop offset="0" stop-color=${a}/><stop offset="1" stop-color=${b}/></radialGradient>`;
    return html`
      <svg class="shelf" width="2880" height="132" viewBox="0 0 2880 132">
        <defs>
          <filter id="soft" x="-50%" y="-100%" width="200%" height="300%"><feGaussianBlur stdDeviation="4"/></filter>
          <linearGradient id="shelf" x2="0" y2="1"><stop offset="0" stop-color="#9ba0a7"/><stop offset=".35" stop-color="#b6b9be"/><stop offset=".75" stop-color="#dcdde0"/><stop offset="1" stop-color="#f0f0f2"/></linearGradient>
          <linearGradient id="tint"><stop offset=".78" stop-color="#a8d4f4" stop-opacity="0"/><stop offset=".93" stop-color="#b4d4ec" stop-opacity=".5"/><stop offset="1" stop-color="#b8e0fa" stop-opacity=".9"/></linearGradient>
          <pattern id="mesh" width="5" height="5" patternUnits="userSpaceOnUse"><path stroke="#c4c4c4" stroke-width=".9" d="M0 0L5 5M5 0L0 5"/></pattern>
          <clipPath id="anc"><circle cx="36" cy="39" r="35"/></clipPath><clipPath id="ledc"><rect x="0" y="8" width="72" height="60"/></clipPath>
          ${lin("fl", "#8fb2ee", "#3d6fc8")}${lin("fr", "#e4ebfa", "#a9bdea")}${lin("rim", "#f0f0f0", "#3a3a3a")}${lin("saf", "#7f9ce0", "#30b4ec")}${lin("chb", "#7fb4e0", "#2c78bc")}
          ${lin("ffb", "#2fb0e4", "#14306e")}${lin("ffo", "#f0702a", "#dc4a1c")}${lin("ml", "#9dbcf0", "#4f80d8")}${lin("bk", "#e6bd7a", "#c79445")}${lin("nt", "#f4f0a8", "#ece882")}
          ${lin("mb", "#5aa8f8", "#38a8f8")}${lin("mw", "#ffffff", "#cfdcec")}${lin("ibk", "#f8a82c", "#f07020")}${lin("any", "#c8d0d8", "#ffffff")}${lin("sg", "#868686", "#464646")}${lin("sh", "#e6e6e6", "#ffffff")}
          ${rad("itb", "#3cc4f4", "#1c5a9c")}${rad("asb", "#28b4fa", "#1440b0")}
        </defs>
        <path fill="url(#shelf)" d="M84 65H2799Q2808 65 2812 72L2841 126H38L68 73Q73 65 84 65Z"/>
        <path fill="url(#tint)" d="M84 65H2799Q2808 65 2812 72L2841 126H38L68 73Q73 65 84 65Z"/>
        <path fill="none" stroke="#6c747d" stroke-width="1.500" d="M38 125L68 73Q73 65 84 65H2799Q2808 65 2812 72L2841 125"/>
        <path stroke="#fff" stroke-width="2" d="M39 125H2841"/><path fill="#a9abad" d="M38 126.500H2842V130Q2841 132 2839 132H41Q38 132 38 129Z"/>
        <path stroke="#8d949b" stroke-width="2" d="M2294 75L2308 116"/><path stroke="#e6e8ea" d="M2296 75L2310 116"/>
      </svg>
      ${apps.map((a) => this.slot_(a))}
      <div class="split"></div>
      ${stash.map((a) => this.slot_(a))}`;
  }
}

@customElement("app-root")
class AppRoot extends LitElement {
  static styles = css`
    :host { display: flex; flex-direction: column; position: relative; width: 2880px; height: 1800px; overflow: hidden; background: #4593dd; }
    .wall { position: absolute; left: 0; top: 0; }
    menu-bar { z-index: 2; box-shadow: 0 2px 10px rgba(0, 0, 0, 0.5); }
    .work { position: relative; display: grid; grid-template-columns: 2636px 244px; height: 1624px; }
    .icons { position: relative; display: flex; flex-direction: column; }
    .icons desktop-item:first-child { height: 187px; }
  `;
  render() {
    const items: [string, string, number][] = [
      ["Sublime Text 2", "drive", 186], ["folder", "folder", 76], ["math.html", "doc", 126], ["math1.html", "doc", 143],
      ["login.html", "doc", 126], ["question2.html", "doc", 189], ["question4.html", "doc", 189],
    ];
    return html`
      <svg class="wall" width="2880" height="1800" viewBox="0 0 2880 1800">
        <defs>
          <linearGradient id="sky" x2="0" y2="1"><stop offset="0" stop-color="#3d8ddb"/><stop offset=".4" stop-color="#4a96df"/><stop offset=".7" stop-color="#579be1"/><stop offset=".93" stop-color="#66a5e5"/><stop offset="1" stop-color="#5b9fe0"/></linearGradient>
          <linearGradient id="floor"><stop offset="0" stop-color="#cbe4f8"/><stop offset=".03" stop-color="#b2bcc8"/><stop offset=".62" stop-color="#aab6c4"/><stop offset=".8" stop-color="#7ba0c6"/><stop offset=".94" stop-color="#62a2e4"/><stop offset="1" stop-color="#5b9fe0"/></linearGradient>
          <linearGradient id="seam" x2="0" y2="1"><stop offset="0" stop-color="#1f5ea0" stop-opacity=".55"/><stop offset="1" stop-color="#1f5ea0" stop-opacity="0"/></linearGradient>
          <filter id="sf"><feGaussianBlur stdDeviation="11"/></filter>
        </defs>
        <rect width="2880" height="1800" fill="url(#sky)"/>
        <rect y="1640" width="2700" height="160" fill="url(#floor)"/>
        <rect y="130" width="2880" height="26" fill="url(#seam)"/>
        <path fill="#fff" d="M2880 1164Q2780 1320 2714 1398Q2560 1540 2437 1668L2320 1800H2440L2552 1668L2636 1570Q2700 1500 2757 1406Q2820 1310 2880 1212Z"/>
        <path fill="#fff" d="M2880 1365Q2810 1490 2740 1585L2700 1650L2600 1800H2680L2730 1733Q2830 1560 2880 1449Z"/>
        <rect x="66" y="1600" width="1734" height="88" fill="#222" opacity=".32" filter="url(#sf)"/>
      </svg>
      <menu-bar></menu-bar>
      <main class="work">
        <browser-window></browser-window>
        <section class="icons">${items.map(([n, k, w]) => html`<desktop-item name=${n} kind=${k} span=${w}></desktop-item>`)}</section>
      </main>
      <dock-shelf></dock-shelf>`;
  }
}
